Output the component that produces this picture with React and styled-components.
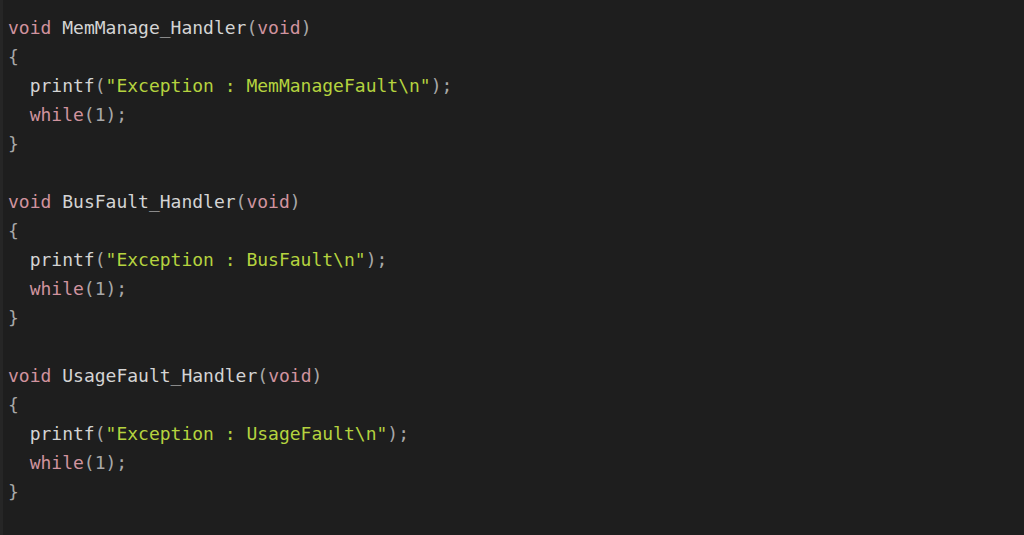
import React from "react";
import styled, { createGlobalStyle } from "styled-components";

const Global = createGlobalStyle`
  html, body { margin: 0; padding: 0; background: #1e1e1e; }
  #root { min-height: 100vh; }
`;

const Editor = styled.pre`
  margin: 0;
  box-sizing: border-box;
  width: 1024px;
  height: 535px;
  background: #1e1e1e;
  border-left: 3px solid #262626;
  padding: 13px 0 0 5px;
  font-family: "DejaVu Sans Mono", "Liberation Mono", monospace;
  font-size: 18px;
  line-height: 29px;
  color: #d4d4d4;
  overflow: hidden;
`;

const Line = styled.div`
  height: 29px;
  white-space: pre;
  padding-left: ${(p) => (p.$indent ? p.$indent * 10.84 : 0)}px;
`;

const Kw = styled.span`
  color: #d0939e;
`;
const Id = styled.span`
  color: #d4d4d4;
`;
const Punct = styled.span`
  color: #a8a8a8;
`;
const Str = styled.span`
  color: #b5d33f;
`;

const blocks = [
  { name: "MemManage_Handler", msg: "MemManageFault" },
  { name: "BusFault_Handler", msg: "BusFault" },
  { name: "UsageFault_Handler", msg: "UsageFault" },
];

export default function App() {
  return (
    <>
      <Global />
      <Editor>
        {blocks.map((b, i) => (
          <React.Fragment key={b.name}>
            {i > 0 && <Line> </Line>}
            <Line>
              <Kw>void</Kw> <Id>{b.name}</Id>
              <Punct>(</Punct>
              <Kw>void</Kw>
              <Punct>)</Punct>
            </Line>
            <Line>
              <Punct>{"{"}</Punct>
            </Line>
            <Line $indent={2}>
              <Id>printf</Id>
              <Punct>(</Punct>
              <Str>{`"Exception : ${b.msg}\\n"`}</Str>
              <Punct>);</Punct>
            </Line>
            <Line $indent={2}>
              <Kw>while</Kw>
              <Punct>(1);</Punct>
            </Line>
            <Line>
              <Punct>{"}"}</Punct>
            </Line>
          </React.Fragment>
        ))}
      </Editor>
    </>
  );
}
